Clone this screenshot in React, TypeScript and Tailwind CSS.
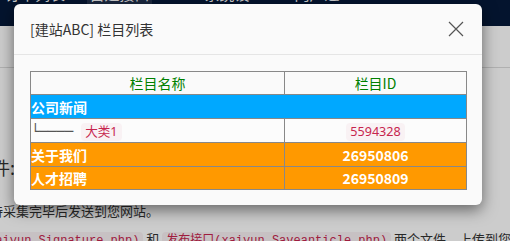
import React from "react";

const FONT = { fontFamily: '"Noto Sans CJK SC", "Noto Sans", sans-serif' };

function CloseIcon() {
  return (
    <svg width="16" height="16" viewBox="0 0 16 16" fill="none">
      <path d="M1 1 L15 15 M15 1 L1 15" stroke="#555" strokeWidth="1.2" />
    </svg>
  );
}

function Code({ children }: { children: React.ReactNode }) {
  return (
    <span
      className="inline-block rounded-[4px] bg-[#f9f2f4] px-[4px] text-[12.6px] leading-[18px] text-[#c7254e]"
      style={{ fontFamily: '"Noto Sans", "Noto Sans CJK SC", sans-serif' }}
    >
      {children}
    </span>
  );
}

export default function App() {
  return (
    <div className="relative h-[241px] w-[510px] overflow-hidden bg-white" style={FONT}>
      {/* page behind */}
      <div className="h-[26px] overflow-hidden bg-[#061a3a]">
        <div className="-mt-[16px] flex items-start text-[15px] leading-[20px] text-white">
          <div className="ml-[2px] w-[66px] text-center">订单列表</div>
          <div className="ml-[19px] h-[20px] w-[65px] bg-[#22324f] text-center">自建接口</div>
          <div className="ml-[50px] w-[50px] text-center">系统设置</div>
          <div className="ml-[42px] w-[46px] text-center">门户通知</div>
        </div>
      </div>
      <div className="h-[42px] border-b border-[#dddddd]" />
      <div className="text-[#333333]">
        <div className="-ml-[62px] mt-[85px] whitespace-nowrap text-[18px] leading-[28px]">安装插件:</div>
        <div className="-ml-[23px] mt-[20px] whitespace-nowrap text-[13px] leading-[20px]">等待采集完毕后发送到您网站。</div>
        <div className="-ml-[71px] mt-[7px] whitespace-nowrap text-[13px] leading-[22px]">
          <span
            className="rounded-[4px] bg-[#f9f2f4] px-[4px] py-[2px] text-[12px] text-[#c7254e]"
            style={{ fontFamily: '"Liberation Mono", "Noto Sans CJK SC", monospace' }}
          >
            签名接口(xaiyun_Signature.php)
          </span>
          <span> 和 </span>
          <span
            className="rounded-[4px] bg-[#f9f2f4] px-[4px] py-[2px] text-[12px] text-[#c7254e]"
            style={{ fontFamily: '"Liberation Mono", "Noto Sans CJK SC", monospace' }}
          >
            发布接口(xaiyun_Saveanticle.php)
          </span>
          <span> 两个文件，上传到您的网站根目录</span>
        </div>
      </div>

      {/* overlay */}
      <div className="absolute inset-0 bg-black/20" />

      {/* modal */}
      <div className="absolute left-[14px] top-[4px] w-[468px] rounded-[6px] bg-[#fafafa] shadow-[0_5px_15px_rgba(0,0,0,0.5)]">
        <div className="flex items-center justify-between border-b border-[#e5e5e5] py-[15px] pl-[16px] pr-[16px]">
          <div className="text-[14px] leading-[20px] text-[#333333]">[建站ABC] 栏目列表</div>
          <button className="flex h-[20px] w-[20px] items-center justify-center">
            <CloseIcon />
          </button>
        </div>
        <div className="pb-[15px] pl-[16px] pr-[15px] pt-[16px]">
          <table className="w-[437px] border-collapse border border-[#888888] text-[14px]">
            <tbody>
              <tr className="h-[23px]">
                <td className="w-[254px] border border-[#888888] p-0 text-center leading-[20px] text-[#008000]">栏目名称</td>
                <td className="border border-[#888888] p-0 text-center leading-[20px] text-[#008000]">栏目ID</td>
              </tr>
              <tr className="h-[24px] bg-[#00a8ff]">
                <td colSpan={2} className="border border-[#888888] p-0 font-bold leading-[20px] text-white">公司新闻</td>
              </tr>
              <tr className="h-[24px] bg-[#fcfcfc]">
                <td className="border border-[#888888] p-0 leading-[20px]">
                  <span className="flex items-center">
                    <span
                      className="text-[14px] leading-[14px] text-[#555555]"
                      style={{ fontFamily: '"DejaVu Sans Mono", monospace' }}
                    >
                      └────
                    </span>
                    <span className="ml-[8px]">
                      <Code>大类1</Code>
                    </span>
                  </span>
                </td>
                <td className="border border-[#888888] p-0 text-center leading-[20px]">
                  <Code>5594328</Code>
                </td>
              </tr>
              <tr className="h-[24px] bg-[#ff9900]">
                <td className="border border-[#888888] p-0 font-bold leading-[20px] text-white">关于我们</td>
                <td className="border border-[#888888] p-0 text-center font-bold leading-[20px] text-white">26950806</td>
              </tr>
              <tr className="h-[23px] bg-[#ff9900]">
                <td className="border border-[#888888] p-0 font-bold leading-[20px] text-white">人才招聘</td>
                <td className="border border-[#888888] p-0 text-center font-bold leading-[20px] text-white">26950809</td>
              </tr>
            </tbody>
          </table>
        </div>
      </div>
    </div>
  );
}
